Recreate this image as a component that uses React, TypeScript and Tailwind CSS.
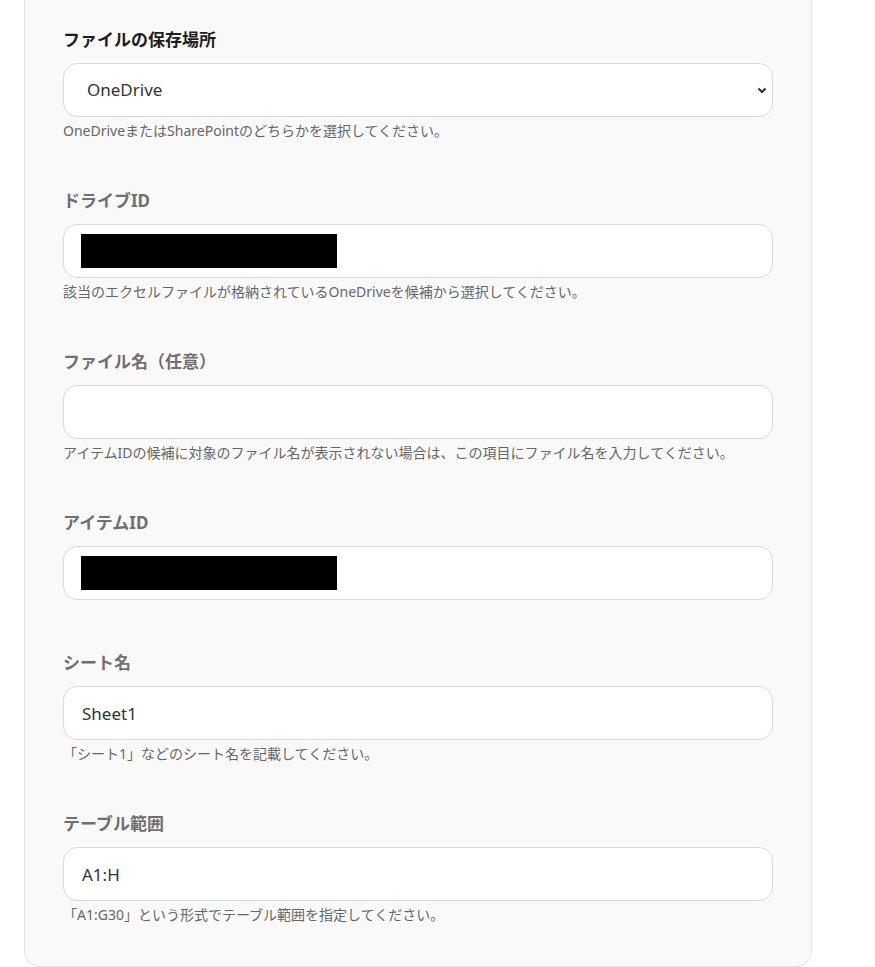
import React from 'react';

type Field = {
  label: string;
  kind: 'select' | 'text' | 'masked';
  value?: string;
  help?: string;
  strong?: boolean;
};

const fields: Field[] = [
  {
    label: 'ファイルの保存場所',
    kind: 'select',
    value: 'OneDrive',
    help: 'OneDriveまたはSharePointのどちらかを選択してください。',
    strong: true,
  },
  {
    label: 'ドライブID',
    kind: 'masked',
    help: '該当のエクセルファイルが格納されているOneDriveを候補から選択してください。',
  },
  {
    label: 'ファイル名（任意）',
    kind: 'text',
    value: '',
    help: 'アイテムIDの候補に対象のファイル名が表示されない場合は、この項目にファイル名を入力してください。',
  },
  { label: 'アイテムID', kind: 'masked' },
  {
    label: 'シート名',
    kind: 'text',
    value: 'Sheet1',
    help: '「シート1」などのシート名を記載してください。',
  },
  {
    label: 'テーブル範囲',
    kind: 'text',
    value: 'A1:H',
    help: '「A1:G30」という形式でテーブル範囲を指定してください。',
  },
];

const boxClass =
  'h-[54px] w-full rounded-[14px] border border-[#d5d8de] bg-white text-[17px] text-[#333] outline-none';

const FieldControl: React.FC<{ field: Field }> = ({ field }) => {
  if (field.kind === 'select') {
    return (
      <div className="relative">
        <select
          defaultValue={field.value}
          className={`${boxClass} appearance-none pl-[23px] pr-10`}
        >
          <option>OneDrive</option>
          <option>SharePoint</option>
        </select>
        <svg
          className="pointer-events-none absolute right-[6px] top-1/2 h-[10px] w-[10px] -translate-y-1/2"
          viewBox="0 0 10 10"
          fill="none"
          stroke="#333"
          strokeWidth="2"
        >
          <path d="M1.5 3.5 L5 7 L8.5 3.5" />
        </svg>
      </div>
    );
  }

  if (field.kind === 'masked') {
    return (
      <div className={`${boxClass} flex items-center pl-[17px]`}>
        <div className="h-[34px] w-[256px] bg-black" />
      </div>
    );
  }

  return (
    <input
      type="text"
      defaultValue={field.value}
      className={`${boxClass} px-[18px]`}
    />
  );
};

const App: React.FC = () => {
  return (
    <div
      className="min-h-screen bg-white pl-6"
      style={{ fontFamily: '"Noto Sans", "Noto Sans CJK JP", sans-serif' }}
    >
      <div className="flex w-[788px] flex-col gap-[51px] rounded-b-2xl border-x border-b border-[#e4e4e4] bg-[#f9f9f9] px-[38px] pb-[44px] pt-[28px]">
        {fields.map((field) => (
          <div key={field.label} className="flex flex-col">
            <label
              className={`mb-[11px] text-[17px] font-bold leading-6 ${
                field.strong ? 'text-[#1e1e1e]' : 'text-[#6f6f6f]'
              }`}
            >
              {field.label}
            </label>
            <FieldControl field={field} />
            {field.help && (
              <p className="mt-[7px] text-[14px] leading-[14px] text-[#666]">{field.help}</p>
            )}
          </div>
        ))}
      </div>
    </div>
  );
};

export default App;
